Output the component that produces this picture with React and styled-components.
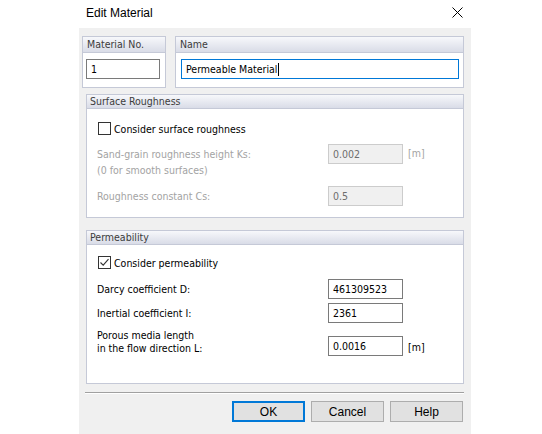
import React, { useState } from 'react';
import styled, { createGlobalStyle } from 'styled-components';

const uiFont = `"DejaVu Sans Condensed", "Liberation Sans", Arial, sans-serif`;
const captionFont = `"Liberation Sans", Arial, sans-serif`;

const GlobalStyle = createGlobalStyle`
  html, body {
    margin: 0;
    padding: 0;
    background: #ffffff;
  }
  body {
    font-family: ${uiFont};
    font-size: 10.5px;
    color: #000;
  }
`;

const Dialog = styled.div`
  width: 392px;
  height: 434px;
  margin-left: 79px;
  display: flex;
  flex-direction: column;
  background: #f0f0f0;
`;

const TitleBar = styled.div`
  height: 28px;
  flex: none;
  display: flex;
  align-items: center;
  justify-content: space-between;
  background: #ffffff;
  padding: 0 8px 0 7px;
`;

const Title = styled.span`
  font-family: ${captionFont};
  font-size: 12px;
  color: #000;
  margin-top: -2px;
`;

const CloseButton = styled.button`
  width: 12px;
  height: 12px;
  padding: 0;
  border: none;
  background: transparent;
  display: flex;
  align-items: center;
  justify-content: center;
  margin-top: -4px;
`;

const Body = styled.div`
  flex: 1;
  display: flex;
  flex-direction: column;
  padding: 8px 7px 0 3px;
`;

const TopRow = styled.div`
  display: flex;
  gap: 9px;
`;

const Group = styled.div`
  box-sizing: border-box;
  width: ${p => p.$width}px;
  margin-left: ${p => p.$indent || 0}px;
  margin-top: ${p => p.$top || 0}px;
  border: 1px solid #c5c9d7;
  background: #ffffff;
  display: flex;
  flex-direction: column;
`;

const GroupHeader = styled.div`
  height: ${p => p.$height}px;
  line-height: ${p => p.$height}px;
  padding-left: ${p => p.$pad || 3}px;
  border-bottom: 1px solid #c5c9d7;
  background: linear-gradient(#f7f8fb, #d9dce7);
  color: #3c3c3c;
  white-space: nowrap;
`;

const GroupBody = styled.div`
  display: flex;
  flex-direction: column;
  padding: ${p => p.$pad};
`;

const TextBox = styled.input`
  box-sizing: border-box;
  width: ${p => p.$width || 75}px;
  height: 20px;
  margin: 0;
  padding: 0 0 0 4px;
  border: 1px solid ${p => (p.$focused ? '#0078d7' : p.disabled ? '#cccccc' : '#7a7a7a')};
  background: ${p => (p.disabled ? '#f0f0f0' : '#ffffff')};
  color: ${p => (p.disabled ? '#6d6d6d' : '#000')};
  font-family: ${uiFont};
  font-size: 10.5px;
  outline: none;
`;

const FocusWrap = styled.div`
  position: relative;
  display: flex;
`;

/* invisible copy of the field text, used only to park the caret after it */
const CaretTrack = styled.span`
  position: absolute;
  top: 4px;
  left: 5px;
  height: 13px;
  font-size: 10.5px;
  color: transparent;
  pointer-events: none;
  white-space: pre;

  &::after {
    content: '';
    display: inline-block;
    width: 1px;
    height: 13px;
    margin-left: 1px;
    vertical-align: top;
    background: #000;
  }
`;

const CheckRow = styled.label`
  display: flex;
  align-items: center;
  gap: 3px;
  height: 13px;
  margin-top: ${p => p.$top}px;
  padding-left: 11px;
  color: #000;
`;

const Box = styled.span`
  box-sizing: border-box;
  width: 13px;
  height: 13px;
  border: 1px solid #333333;
  background: #ffffff;
  display: flex;
  align-items: center;
  justify-content: center;
`;

const FieldRow = styled.div`
  display: grid;
  grid-template-columns: 226px 75px auto;
  column-gap: 5px;
  align-items: ${p => p.$align || 'center'};
  margin-top: ${p => p.$top}px;
  padding-left: 10px;
`;

const Label = styled.div`
  color: ${p => (p.$muted ? '#a3a3a3' : '#000')};
  line-height: ${p => p.$lh || 14}px;
  padding-top: ${p => p.$pt || 0}px;
  padding-bottom: ${p => p.$pb || 0}px;
  white-space: nowrap;
`;

const Unit = styled.span`
  color: ${p => (p.$muted ? '#a3a3a3' : '#000')};
  align-self: ${p => p.$self || 'center'};
  margin-top: ${p => p.$top || 0}px;
`;

const Separator = styled.div`
  margin: 8px 0 0 3px;
  width: 379px;
  border-top: 1px solid #a0a0a0;
  border-bottom: 1px solid #ffffff;
`;

const ButtonRow = styled.div`
  display: flex;
  justify-content: flex-end;
  gap: 6px;
  margin-top: 7px;
  padding-right: 1px;
`;

const Button = styled.button`
  box-sizing: border-box;
  width: 73px;
  height: 21px;
  padding: 0;
  background: #e1e1e1;
  border: ${p => (p.$primary ? '2px solid #0078d7' : '1px solid #adadad')};
  color: #000;
  font-family: ${captionFont};
  font-size: 12px;
`;

const CheckMark = () => (
  <svg width="11" height="11" viewBox="0 0 11 11">
    <path d="M1.5 5.5 L4.2 8.2 L9.5 2.2" fill="none" stroke="#333" strokeWidth="1.1" />
  </svg>
);

const Check = ({ checked, children }) => (
  <>
    <Box>{checked && <CheckMark />}</Box>
    <span>{children}</span>
  </>
);

export default function App() {
  const [roughness] = useState(false);
  const [permeable] = useState(true);
  const name = 'Permeable Material';

  return (
    <>
      <GlobalStyle />
      <Dialog>
        <TitleBar>
          <Title>Edit Material</Title>
          <CloseButton>
            <svg width="11" height="11" viewBox="0 0 11 11">
              <path d="M0.5 0.5 L10.5 10.5 M10.5 0.5 L0.5 10.5" stroke="#000" strokeWidth="1" />
            </svg>
          </CloseButton>
        </TitleBar>

        <Body>
          <TopRow>
            <Group $width={84}>
              <GroupHeader $height={15} $pad={4}>Material No.</GroupHeader>
              <GroupBody $pad="6px 0 8px 3px">
                <TextBox $width={74} defaultValue="1" />
              </GroupBody>
            </Group>
            <Group $width={289}>
              <GroupHeader $height={15} $pad={4}>Name</GroupHeader>
              <GroupBody $pad="6px 0 8px 5px">
                <FocusWrap>
                  <TextBox $width={278} $focused defaultValue={name} />
                  <CaretTrack>{name}</CaretTrack>
                </FocusWrap>
              </GroupBody>
            </Group>
          </TopRow>

          <Group $width={378} $indent={4} $top={6}>
            <GroupHeader $height={13}>Surface Roughness</GroupHeader>
            <GroupBody $pad="0 0 11px 0">
              <CheckRow $top={13}>
                <Check checked={roughness}>Consider surface roughness</Check>
              </CheckRow>
              <FieldRow $top={9} $align="start">
                <Label $muted $lh={16} $pt={2}>
                  Sand-grain roughness height Ks:
                  <br />
                  (0 for smooth surfaces)
                </Label>
                <TextBox disabled defaultValue="0.002" />
                <Unit $muted $self="start" $top={3}>[m]</Unit>
              </FieldRow>
              <FieldRow $top={8}>
                <Label $muted>Roughness constant Cs:</Label>
                <TextBox disabled defaultValue="0.5" />
              </FieldRow>
            </GroupBody>
          </Group>

          <Group $width={378} $indent={4} $top={12}>
            <GroupHeader $height={13}>Permeability</GroupHeader>
            <GroupBody $pad="0 0 27px 0">
              <CheckRow $top={11}>
                <Check checked={permeable}>Consider permeability</Check>
              </CheckRow>
              <FieldRow $top={10}>
                <Label>Darcy coefficient D:</Label>
                <TextBox defaultValue="461309523" />
              </FieldRow>
              <FieldRow $top={4}>
                <Label>Inertial coefficient I:</Label>
                <TextBox defaultValue="2361" />
              </FieldRow>
              <FieldRow $top={6} $align="end">
                <Label $lh={13} $pb={1}>
                  Porous media length
                  <br />
                  in the flow direction L:
                </Label>
                <TextBox defaultValue="0.0016" />
                <Unit $self="center" $top={8}>[m]</Unit>
              </FieldRow>
            </GroupBody>
          </Group>

          <Separator />

          <ButtonRow>
            <Button $primary>OK</Button>
            <Button>Cancel</Button>
            <Button>Help</Button>
          </ButtonRow>
        </Body>
      </Dialog>
    </>
  );
}
